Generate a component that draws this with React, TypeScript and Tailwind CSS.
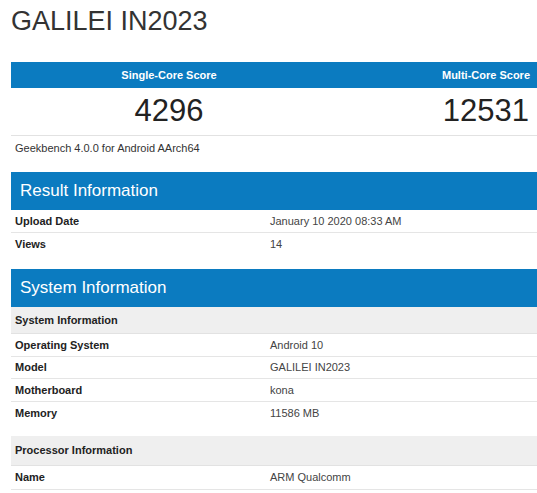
const blue = "bg-[#0b7bc0]";

interface Row {
    label: string;
    value: string;
}

const resultRows: Row[] = [
    { label: "Upload Date", value: "January 10 2020 08:33 AM" },
    { label: "Views", value: "14" },
];

const systemRows: Row[] = [
    { label: "Operating System", value: "Android 10" },
    { label: "Model", value: "GALILEI IN2023" },
    { label: "Motherboard", value: "kona" },
    { label: "Memory", value: "11586 MB" },
];

const processorRows: Row[] = [
    { label: "Name", value: "ARM Qualcomm" },
];

const SectionHeader = ({ title }: { title: string }) => (
    <div className={`${blue} h-[38px] flex items-center pl-[9px] text-[17px] text-white`}>{title}</div>
);

const SubHeader = ({ title, h }: { title: string; h: string }) => (
    <div className={`${h} bg-[#efefef] border-b border-[#e2e2e2] flex items-center pl-[4px] text-[11px] font-bold text-[#222]`}>
        {title}
    </div>
);

const InfoRows = ({ rows }: { rows: Row[] }) => (
    <div>
        {rows.map((row, index) => (
            <div
                key={row.label}
                className={`h-[22.5px] flex items-center text-[11px] ${index < rows.length - 1 ? "border-b border-[#e5e5e5]" : ""}`}
            >
                <div className="w-[259px] pl-[4px] font-bold text-[#222]">{row.label}</div>
                <div className="flex-1 text-[#444]">{row.value}</div>
            </div>
        ))}
    </div>
);

const App = () => {
    return (
        <div className="w-[537px] h-[493px] overflow-hidden bg-white pl-[11px] font-['Liberation_Sans',Arial,sans-serif]">
            <h1 className="pt-[5px] h-[62px] text-[27px] leading-[32px] text-[#333]">GALILEI IN2023</h1>

            <div className={`${blue} h-[26px] flex items-center text-[11px] font-bold text-white`}>
                <div className="w-[316px] text-center">Single-Core Score</div>
                <div className="flex-1 text-right pr-[7px]">Multi-Core Score</div>
            </div>
            <div className="h-[48px] flex items-center border-b border-[#e2e2e2] text-[31px] text-[#222]">
                <div className="w-[316px] text-center">4296</div>
                <div className="flex-1 text-right pr-[8px]">12531</div>
            </div>
            <div className="h-[24px] flex items-center pl-[4px] text-[11px] text-[#333]">
                Geekbench 4.0.0 for Android AArch64
            </div>

            <div className="mt-[12px]">
                <SectionHeader title="Result Information" />
                <InfoRows rows={resultRows} />
            </div>

            <div className="mt-[14px]">
                <SectionHeader title="System Information" />
                <SubHeader title="System Information" h="h-[27px]" />
                <InfoRows rows={systemRows} />
                <div className="mt-[12px]">
                    <SubHeader title="Processor Information" h="h-[30px]" />
                    <div className="border-b border-[#e5e5e5]">
                        <InfoRows rows={processorRows} />
                    </div>
                </div>
            </div>
        </div>
    );
};

export default App;
